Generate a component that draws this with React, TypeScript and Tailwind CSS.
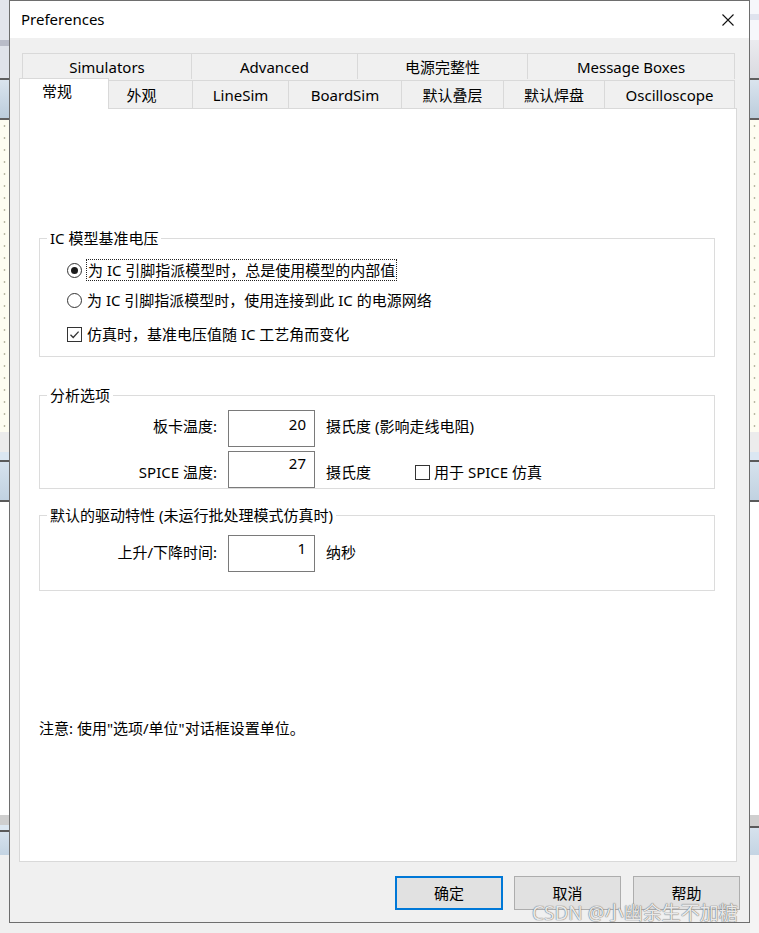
import React from 'react';

const FONT = "font-['Noto_Sans','Noto_Sans_CJK_SC',sans-serif]";

const dots =
  'bg-[#fefdf1] bg-[radial-gradient(circle,#b9b8a2_0.8px,transparent_1.2px)] bg-[length:9px_12px]';

const leftBands: string[] = [
  'h-[40px] bg-[#e3e5ec]',
  'h-[6px] bg-[#b9bcc8]',
  'h-[32px] bg-[#e0e3ea]',
  'h-[2px] bg-[#5f5f5f]',
  'h-[38px] bg-gradient-to-b from-[#dae4ee] to-[#bccddc]',
  'h-[2px] bg-[#5f5f5f]',
  `h-[312px] ${dots}`,
  'h-[20px] bg-[#ececec]',
  'h-[8px] bg-[#dbe7f2]',
  'h-[2px] bg-[#5a5a5a]',
  'h-[38px] bg-gradient-to-b from-[#d6e2ed] to-[#c1d2e1]',
  'h-[2px] bg-[#5a5a5a]',
  'h-[313px] bg-white',
  'h-[10px] bg-[#cfcfcf]',
  'h-[5px] bg-[#dde8f2]',
  'h-[2px] bg-[#5a5a5a]',
  'h-[23px] bg-gradient-to-b from-[#d6e2ed] to-[#c4d4e3]',
  'flex-1 bg-[#f0f0f0]',
];

const rightBands: string[] = [
  'h-[14px] bg-[#f6f7fb]',
  'h-[6px] bg-[#dfe3ee]',
  'h-[20px] bg-[#f6f7fb]',
  'h-[38px] bg-gradient-to-b from-[#ebebef] to-[#d9dae0]',
  'h-[2px] bg-[#5f5f5f]',
  'h-[38px] bg-gradient-to-b from-[#dae4ee] to-[#bccddc]',
  'h-[2px] bg-[#5f5f5f]',
  `h-[312px] ${dots}`,
  'h-[20px] bg-[#ececec]',
  'h-[8px] bg-[#dbe7f2]',
  'h-[2px] bg-[#5a5a5a]',
  'h-[38px] bg-gradient-to-b from-[#d6e2ed] to-[#c1d2e1]',
  'h-[2px] bg-[#5a5a5a]',
  'h-[313px] bg-white',
  'h-[11px] bg-[#cfcfcf]',
  'h-[2px] bg-[#5a5a5a]',
  'h-[27px] bg-gradient-to-b from-[#d6e2ed] to-[#c4d4e3]',
  'flex-1 bg-[#f4f4f4]',
];

const Strip = ({ bands }: { bands: string[] }) => (
  <div className="w-[9px] h-full flex flex-col shrink-0">
    {bands.map((b, i) => (
      <div key={i} className={`w-full shrink-0 ${b}`} />
    ))}
  </div>
);

const backTabs = [
  { label: 'Simulators', w: 'w-[170px] border-l' },
  { label: 'Advanced', w: 'w-[166px]' },
  { label: '电源完整性', w: 'w-[170px]' },
  { label: 'Message Boxes', w: 'w-[207px]' },
];

const frontTabs = [
  { label: '外观', w: 'w-[84px] pr-[18px]' },
  { label: 'LineSim', w: 'w-[96px]' },
  { label: 'BoardSim', w: 'w-[113px]' },
  { label: '默认叠层', w: 'w-[102px]' },
  { label: '默认焊盘', w: 'w-[101px]' },
  { label: 'Oscilloscope', w: 'w-[130px]' },
];

const Radio = ({ checked }: { checked?: boolean }) => (
  <span className="w-[15px] h-[15px] rounded-full border border-[#333333] bg-white flex items-center justify-center shrink-0">
    {checked && <span className="w-[7px] h-[7px] rounded-full bg-[#1b1b1b]" />}
  </span>
);

const Check = ({ checked }: { checked?: boolean }) => (
  <span className="w-[15px] h-[15px] border border-[#333333] bg-white flex items-center justify-center shrink-0">
    {checked && (
      <svg width="11" height="11" viewBox="0 0 11 11">
        <path d="M1.5 5.8 L4.2 8.5 L9.6 2.6" fill="none" stroke="#333333" strokeWidth="1.3" />
      </svg>
    )}
  </span>
);

const Field = ({ value, pt }: { value: string; pt: string }) => (
  <div className={`w-[87px] h-[37px] border border-[#7a7a7a] bg-white text-right pr-[8px] shrink-0 ${pt}`}>
    {value}
  </div>
);

const Group = ({ title, children }: { title: string; children: React.ReactNode }) => (
  <fieldset className="w-[676px] border border-[#dcdcdc] min-w-0">
    <legend className="ml-[7px] px-[3px] leading-[20px]">{title}</legend>
    {children}
  </fieldset>
);

export default function App() {
  return (
    <div className={`w-[759px] h-[933px] flex overflow-hidden relative bg-[#f0f0f0] text-[15px] leading-[20px] text-black ${FONT}`}>
      <Strip bands={leftBands} />

      <div className="w-[741px] h-[923px] shrink-0 border border-[#6e6e6e] bg-[#f0f0f0] flex flex-col">
        {/* title bar */}
        <div className="h-[37px] bg-white flex items-center justify-between pl-[11px] pr-[15px] shrink-0">
          <span className="pb-[1px]">Preferences</span>
          <svg width="12" height="12" viewBox="0 0 12 12">
            <path d="M0.5 0.5 L11.5 11.5 M11.5 0.5 L0.5 11.5" stroke="#111111" strokeWidth="1.1" />
          </svg>
        </div>

        <div className="pt-[15px] pl-[9px] flex flex-col">
          {/* back row of tabs */}
          <div className="flex h-[26px] ml-[3px]">
            {backTabs.map((t) => (
              <div
                key={t.label}
                className={`${t.w} h-full flex items-center justify-center border-t border-r border-[#d9d9d9] bg-[#f0f0f0]`}
              >
                {t.label}
              </div>
            ))}
          </div>

          {/* front row of tabs */}
          <div className="flex items-end h-[29px] relative z-10">
            <div className="w-[90px] h-[31px] -mb-px bg-white border-t border-l border-r border-[#d9d9d9] flex justify-center items-start pt-[2px] pr-[14px]">
              常规
            </div>
            {frontTabs.map((t) => (
              <div
                key={t.label}
                className={`${t.w} h-[28px] flex items-center justify-center border-t border-r border-[#d9d9d9] bg-[#f0f0f0]`}
              >
                {t.label}
              </div>
            ))}
          </div>

          {/* tab page */}
          <div className="w-[718px] h-[754px] border border-[#d9d9d9] bg-white pl-[19px] pt-[119px] flex flex-col">
            <Group title="IC 模型基准电压">
              <div className="pt-[12px] pb-[12px] pl-[27px] flex flex-col">
                <div className="h-[20px] flex items-center gap-[4px]">
                  <Radio checked />
                  <span className="border border-dotted border-[#222222] px-[1px] leading-[20px]">
                    为 IC 引脚指派模型时，总是使用模型的内部值
                  </span>
                </div>
                <div className="h-[20px] mt-[10px] flex items-center gap-[5px]">
                  <Radio />
                  <span>为 IC 引脚指派模型时，使用连接到此 IC 的电源网络</span>
                </div>
                <div className="h-[20px] mt-[14px] flex items-center gap-[5px]">
                  <Check checked />
                  <span>仿真时，基准电压值随 IC 工艺角而变化</span>
                </div>
              </div>
            </Group>

            <div className="mt-[28px]">
              <Group title="分析选项">
                <div className="flex flex-col">
                  <div className="flex items-start mt-[5px]">
                    <div className="w-[177px] text-right mt-[6px]">板卡温度:</div>
                    <div className="ml-[11px]">
                      <Field value="20" pt="pt-[3px]" />
                    </div>
                    <div className="ml-[11px] mt-[6px]">摄氏度 (影响走线电阻)</div>
                  </div>
                  <div className="flex items-start mt-[4px]">
                    <div className="w-[177px] text-right mt-[11px]">SPICE 温度:</div>
                    <div className="ml-[11px]">
                      <Field value="27" pt="pt-[1px]" />
                    </div>
                    <div className="ml-[11px] mt-[11px] w-[89px]">摄氏度</div>
                    <div className="mt-[11px] flex items-center gap-[4px] h-[20px]">
                      <Check />
                      <span>用于 SPICE 仿真</span>
                    </div>
                  </div>
                </div>
              </Group>
            </div>

            <div className="mt-[16px]">
              <Group title="默认的驱动特性 (未运行批处理模式仿真时)">
                <div className="flex items-start mt-[10px] mb-[18px]">
                  <div className="w-[177px] text-right mt-[7px]">上升/下降时间:</div>
                  <div className="ml-[11px]">
                    <Field value="1" pt="pt-[2px]" />
                  </div>
                  <div className="ml-[11px] mt-[7px]">纳秒</div>
                </div>
              </Group>
            </div>

            <div className="mt-[127px]">注意: 使用&quot;选项/单位&quot;对话框设置单位。</div>
          </div>

          {/* buttons */}
          <div className="flex mt-[14px] pl-[376px]">
            <button className="w-[108px] h-[34px] border-2 border-[#0078d7] bg-[#e1e1e1]">确定</button>
            <button className="w-[107px] h-[34px] ml-[11px] border border-[#adadad] bg-[#e1e1e1]">取消</button>
            <button className="w-[107px] h-[34px] ml-[12px] border border-[#adadad] bg-[#e1e1e1]">帮助</button>
          </div>
        </div>
      </div>

      <Strip bands={rightBands} />

      <div className="absolute left-[532px] top-[904px] text-[19px] leading-[19px] text-[#ffffffd9] [text-shadow:0_0_1px_#6b6b6b,0_0_1px_#6b6b6b]">
        CSDN @小幽余生不加糖
      </div>
    </div>
  );
}
